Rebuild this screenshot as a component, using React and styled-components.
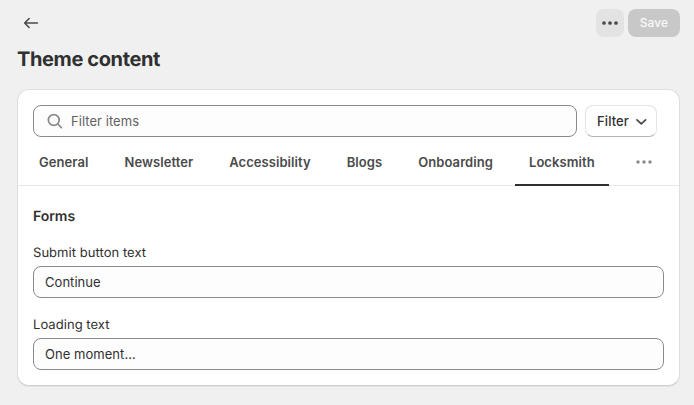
import React from "react";
import styled, { createGlobalStyle } from "styled-components";

const GlobalStyle = createGlobalStyle`
  *, *::before, *::after { box-sizing: border-box; }
  body { margin: 0; background: #f0f0f0; }
  button, input { font: inherit; letter-spacing: inherit; margin: 0; }
`;

const Page = styled.main`
  width: 694px;
  height: 405px;
  padding: 9px 14px 0 17px;
  background: #f0f0f0;
  color: #303030;
  font: 400 13px/20px Inter, "Liberation Sans", sans-serif;
  letter-spacing: 0.045px;
  text-rendering: geometricPrecision;
`;

const TopBar = styled.header`
  display: flex;
  align-items: center;
  justify-content: space-between;
  height: 28px;
`;

const Actions = styled.div`
  display: flex;
  gap: 4px;
`;

const IconButton = styled.button`
  display: flex;
  align-items: center;
  justify-content: center;
  width: 28px;
  height: 28px;
  padding: 0;
  border: 0;
  border-radius: 8px;
  background: ${(p) => (p.$filled ? "#e3e3e3" : "transparent")};
  color: ${(p) => p.$color || "#4a4a4a"};
`;

const SaveButton = styled.button`
  width: 52px;
  height: 28px;
  padding: 0;
  border: 0;
  border-radius: 8px;
  background: #c8c8c8;
  color: #fafafa;
  font-size: 12px;
  font-weight: 550;
  letter-spacing: 0.1px;
`;

const Title = styled.h1`
  margin: 10px 0 18px;
  font-size: 20px;
  line-height: 24px;
  font-weight: 650;
  letter-spacing: -0.38px;
`;

const Card = styled.section`
  width: 663px;
  height: 297px;
  border: 1px solid #dedede;
  border-bottom-color: #cfcfcf;
  border-radius: 12px;
  background: #fff;
  box-shadow: 0 1px 0 rgba(26, 26, 26, 0.06);
`;

const FilterRow = styled.div`
  display: flex;
  gap: 8px;
  padding: 15px 15px 0;
`;

const Search = styled.label`
  display: flex;
  align-items: center;
  gap: 6px;
  width: 544px;
  height: 32px;
  padding: 0 12px;
  border: 1px solid #8a8a8a;
  border-radius: 8px;
  background: #fdfdfd;
  color: #8a8a8a;
`;

const SearchInput = styled.input`
  flex: 1;
  min-width: 0;
  padding: 0;
  border: 0;
  outline: 0;
  background: transparent;
  &::placeholder { color: #616161; opacity: 1; }
`;

const FilterButton = styled.button`
  display: flex;
  align-items: center;
  justify-content: space-between;
  width: 72px;
  height: 32px;
  padding: 0 8px 0 11px;
  border: 1px solid #e3e3e3;
  border-bottom-color: #b5b5b5;
  border-radius: 8px;
  background: #fff;
  color: #303030;
  font-weight: 550;
  letter-spacing: 0.1px;
`;

const TabList = styled.nav`
  display: flex;
  gap: 8px;
  height: 49px;
  padding-left: 7px;
  border-bottom: 1px solid #e6e6e6;
`;

const Tab = styled.button`
  height: 49px;
  padding: 3px 14px 0;
  border: 0;
  border-bottom: 2px solid ${(p) => (p.$active ? "#303030" : "transparent")};
  background: transparent;
  color: #4a4a4a;
  font-weight: 600;
  letter-spacing: 0.07px;
  white-space: nowrap;
`;

const MoreTabs = styled.div`
  display: flex;
  align-items: center;
  height: 50px;
  margin-left: 13px;
`;

const Form = styled.form`
  padding: 21px 15px 0;
`;

const FormTitle = styled.h2`
  margin: 0 0 16px;
  font-size: 14px;
  line-height: 20px;
  font-weight: 600;
  letter-spacing: -0.05px;
`;

const Field = styled.label`
  display: block;
  margin-bottom: 17px;
`;

const FieldLabel = styled.span`
  display: block;
  margin-bottom: 3px;
`;

const TextInput = styled.input`
  display: block;
  width: 100%;
  height: 32px;
  padding: 0 11px;
  border: 1px solid #8a8a8a;
  border-radius: 8px;
  outline: 0;
  background: #fdfdfd;
  color: #303030;
`;

const Dots = ({ radius = 1.85 }) => (
  <svg width="20" height="20" viewBox="0 0 20 20" fill="currentColor" aria-hidden="true">
    <circle cx="4" cy="10" r={radius} />
    <circle cx="10" cy="10" r={radius} />
    <circle cx="16" cy="10" r={radius} />
  </svg>
);

const BackArrow = () => (
  <svg width="20" height="20" viewBox="0 0 20 20" fill="none" stroke="currentColor" strokeWidth="1.6" strokeLinecap="round" strokeLinejoin="round" aria-hidden="true">
    <path d="M16.4 10H4M8.1 5.5 3.7 10l4.4 4.5" />
  </svg>
);

const SearchIcon = () => (
  <svg width="19" height="20" viewBox="0 0 19 20" fill="none" stroke="currentColor" strokeWidth="1.7" strokeLinecap="round" aria-hidden="true">
    <circle cx="7.8" cy="9" r="5.4" />
    <path d="m11.8 13 3.6 3.6" />
  </svg>
);

const Chevron = () => (
  <svg width="14" height="14" viewBox="0 0 14 14" fill="none" stroke="#4a4a4a" strokeWidth="1.8" strokeLinecap="round" strokeLinejoin="round" aria-hidden="true">
    <path d="m3 5.9 4.3 4 4.3-4" />
  </svg>
);

const tabs = ["General", "Newsletter", "Accessibility", "Blogs", "Onboarding", "Locksmith"];

export default function App() {
  return (
    <Page>
      <GlobalStyle />
      <TopBar>
        <IconButton aria-label="Back"><BackArrow /></IconButton>
        <Actions>
          <IconButton $filled aria-label="More actions"><Dots /></IconButton>
          <SaveButton>Save</SaveButton>
        </Actions>
      </TopBar>
      <Title>Theme content</Title>
      <Card>
        <FilterRow>
          <Search>
            <SearchIcon />
            <SearchInput placeholder="Filter items" />
          </Search>
          <FilterButton>Filter <Chevron /></FilterButton>
        </FilterRow>
        <TabList>
          {tabs.map((name) => (
            <Tab key={name} $active={name === "Locksmith"}>{name}</Tab>
          ))}
          <MoreTabs>
            <IconButton $color="#8a8a8a" aria-label="More tabs"><Dots radius={1.75} /></IconButton>
          </MoreTabs>
        </TabList>
        <Form>
          <FormTitle>Forms</FormTitle>
          <Field>
            <FieldLabel>Submit button text</FieldLabel>
            <TextInput defaultValue="Continue" />
          </Field>
          <Field>
            <FieldLabel>Loading text</FieldLabel>
            <TextInput defaultValue="One moment..." />
          </Field>
        </Form>
      </Card>
    </Page>
  );
}
